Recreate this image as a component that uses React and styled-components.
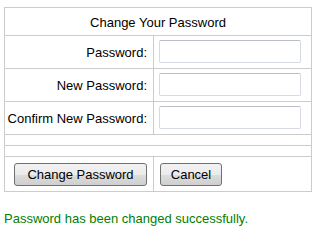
import React from 'react';
import styled, { createGlobalStyle } from 'styled-components';

const GlobalStyle = createGlobalStyle`
	body {
		margin: 0;
		background: #fff;
		font-family: 'Liberation Sans', Arial, sans-serif;
		font-size: 13px;
		color: #000;
	}
`;

const Page = styled.div`
	padding: 7px 4px 0 4px;
`;

const FormGrid = styled.div`
	display: grid;
	grid-template-columns: 149px 158px;
	grid-template-rows: 28px 33px 33px 33px 11px 11px 35px;
	width: 308px;
	box-sizing: border-box;
	border-top: 1px solid #cccccc;
	border-left: 1px solid #cccccc;
`;

const Cell = styled.div`
	box-sizing: border-box;
	border-right: 1px solid #cccccc;
	border-bottom: 1px solid #cccccc;
	display: flex;
	align-items: center;
	justify-content: ${(p) => p.$align || 'flex-start'};
	padding: 0 ${(p) => (p.$align === 'flex-end' ? '6px' : '0')} 0
		${(p) => (p.$align === 'flex-end' ? '0' : '6px')};
	grid-column: ${(p) => (p.$span ? '1 / span 2' : 'auto')};
`;

const HeaderCell = styled(Cell)`
	justify-content: center;
	padding: 2px 0 0 0;
`;

const Label = styled.span`
	white-space: nowrap;
	padding-top: 1px;
`;

const TextInput = styled.input`
	box-sizing: border-box;
	width: 142px;
	height: 23px;
	margin: 0 0 1px -1px;
	border: 1px solid #d6dae2;
	border-top-color: #b9bdc5;
	border-radius: 2px;
	outline: none;
	font-family: inherit;
	font-size: 13px;
	padding: 0 3px;
`;

const Button = styled.button`
	box-sizing: border-box;
	height: 23px;
	width: ${(p) => p.$width}px;
	margin-top: 1px;
	padding: 0 6px;
	border: 1px solid #707070;
	border-radius: 3px;
	background: linear-gradient(#f2f2f2 0%, #ebebeb 50%, #dddddd 51%, #cfcfcf 100%);
	font-family: inherit;
	font-size: 13px;
	color: #000;
	cursor: pointer;
`;

const Message = styled.p`
	margin: 19px 0 0 0;
	color: #008000;
	font-size: 13px;
	line-height: 15px;
`;

const fields = ['Password:', 'New Password:', 'Confirm New Password:'];

export default function App() {
	return (
		<>
			<GlobalStyle />
			<Page>
				<FormGrid>
					<HeaderCell $span>Change Your Password</HeaderCell>
					{fields.map((f) => (
						<React.Fragment key={f}>
							<Cell $align='flex-end'>
								<Label>{f}</Label>
							</Cell>
							<Cell>
								<TextInput type='password' />
							</Cell>
						</React.Fragment>
					))}
					<Cell $span />
					<Cell $span />
					<Cell $align='flex-end'>
						<Button $width={133}>Change Password</Button>
					</Cell>
					<Cell>
						<Button $width={62}>Cancel</Button>
					</Cell>
				</FormGrid>
				<Message>Password has been changed successfully.</Message>
			</Page>
		</>
	);
}
